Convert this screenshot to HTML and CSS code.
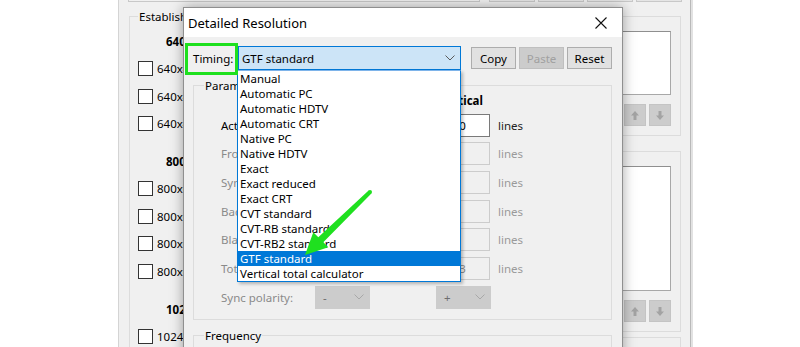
FILE: index.html
```html
<!DOCTYPE html>
<html>
<head>
<meta charset="utf-8">
<link rel="stylesheet" href="styles.css">
</head>
<body>
<div class="desk">
  <div class="bgwin">
    <div class="topbar">
      <div class="tb tb-wide"></div>
      <div class="tb"></div>
      <div class="tb"></div>
      <div class="tb"></div>
      <div class="tb"></div>
    </div>
    <div class="bgbody">
      <fieldset class="estab">
        <legend>Established resolutions</legend>
        <div class="sec">
          <div class="sech">640x480</div>
          <label class="cb"><span class="box"></span>640x480 @ 60 Hz</label>
          <label class="cb"><span class="box"></span>640x480 @ 72 Hz</label>
          <label class="cb"><span class="box"></span>640x480 @ 75 Hz</label>
        </div>
        <div class="sec">
          <div class="sech">800x600</div>
          <label class="cb"><span class="box"></span>800x600 @ 56 Hz</label>
          <label class="cb"><span class="box"></span>800x600 @ 60 Hz</label>
          <label class="cb"><span class="box"></span>800x600 @ 72 Hz</label>
          <label class="cb"><span class="box"></span>800x600 @ 75 Hz</label>
        </div>
        <div class="sec">
          <div class="sech">1024x768</div>
          <label class="cb"><span class="box"></span>1024x768 @ 60 Hz</label>
        </div>
      </fieldset>
      <div class="rcol">
        <div class="rgroup g1">
          <div class="lbox lb1"></div>
          <div class="arrows">
            <span class="abtn"><svg width="10" height="11" viewBox="0 0 10 11"><path d="M5 1 L9 5.5 H6.5 V10 H3.5 V5.5 H1 Z" fill="#a3a3a3"/></svg></span>
            <span class="abtn"><svg width="10" height="11" viewBox="0 0 10 11"><path d="M5 10 L9 5.5 H6.5 V1 H3.5 V5.5 H1 Z" fill="#a3a3a3"/></svg></span>
          </div>
        </div>
        <div class="rgroup g2">
          <div class="lbox lb2"></div>
          <div class="arrows">
            <span class="abtn"><svg width="10" height="11" viewBox="0 0 10 11"><path d="M5 1 L9 5.5 H6.5 V10 H3.5 V5.5 H1 Z" fill="#a3a3a3"/></svg></span>
            <span class="abtn"><svg width="10" height="11" viewBox="0 0 10 11"><path d="M5 10 L9 5.5 H6.5 V1 H3.5 V5.5 H1 Z" fill="#a3a3a3"/></svg></span>
          </div>
        </div>
        <div class="rgroup g3"></div>
      </div>
    </div>
  </div>

  <div class="dialog">
    <div class="titlebar">
      <span class="title">Detailed Resolution</span>
      <span class="close"><svg width="12" height="12" viewBox="0 0 12 12"><path d="M0.5 0.5 L11.5 11.5 M11.5 0.5 L0.5 11.5" stroke="#111" stroke-width="1.1"/></svg></span>
    </div>
    <div class="dbody">
      <div class="timing">
        <span class="tlabel">Timing:</span>
        <div class="combo">
          <span class="ctext">GTF standard</span>
          <svg class="chev" width="10" height="6" viewBox="0 0 10 6"><path d="M0.5 0.5 L5 5 L9.5 0.5" stroke="#5a5a5a" fill="none" stroke-width="1"/></svg>
        </div>
        <span class="btn">Copy</span>
        <span class="btn dis">Paste</span>
        <span class="btn">Reset</span>
      </div>
      <fieldset class="params">
        <legend>Parameters</legend>
        <div class="pgrid">
          <span></span>
          <span class="colh hcol">Horizontal</span>
          <span></span>
          <span class="colh vcol">Vertical</span>
          <span></span>

          <span class="rl">Active:</span>
          <span class="inp on">640</span><span class="unit">pixels</span>
          <span class="inp on">480</span><span class="unit">lines</span>

          <span class="rl off">Front porch:</span>
          <span class="inp"></span><span class="unit off">pixels</span>
          <span class="inp"></span><span class="unit off">lines</span>

          <span class="rl off">Sync width:</span>
          <span class="inp"></span><span class="unit off">pixels</span>
          <span class="inp"></span><span class="unit off">lines</span>

          <span class="rl off">Back porch:</span>
          <span class="inp"></span><span class="unit off">pixels</span>
          <span class="inp"></span><span class="unit off">lines</span>

          <span class="rl off">Blanking:</span>
          <span class="inp"></span><span class="unit off">pixels</span>
          <span class="inp"></span><span class="unit off">lines</span>

          <span class="rl off">Total:</span>
          <span class="inp gray">800</span><span class="unit off">pixels</span>
          <span class="inp gray">503</span><span class="unit off">lines</span>

          <span class="rl off">Sync polarity:</span>
          <span class="dcombo">-<svg width="10" height="6" viewBox="0 0 10 6"><path d="M0.5 0.5 L5 5 L9.5 0.5" stroke="#a8a8a8" fill="none"/></svg></span>
          <span></span>
          <span class="dcombo plus">+<svg width="10" height="6" viewBox="0 0 10 6"><path d="M0.5 0.5 L5 5 L9.5 0.5" stroke="#a8a8a8" fill="none"/></svg></span>
          <span></span>
        </div>
      </fieldset>
      <fieldset class="freq">
        <legend>Frequency</legend>
        <div class="fpad"></div>
      </fieldset>
    </div>
    <ul class="droplist">
      <li>Manual</li>
      <li>Automatic PC</li>
      <li>Automatic HDTV</li>
      <li>Automatic CRT</li>
      <li>Native PC</li>
      <li>Native HDTV</li>
      <li>Exact</li>
      <li>Exact reduced</li>
      <li>Exact CRT</li>
      <li>CVT standard</li>
      <li>CVT-RB standard</li>
      <li>CVT-RB2 standard</li>
      <li class="sel">GTF standard</li>
      <li>Vertical total calculator</li>
    </ul>
  </div>

  <div class="hlbox"></div>
  <svg class="arrow" width="800" height="347" viewBox="0 0 800 347">
    <polygon points="368.6,190.6 371.4,193.4 323.3,242.3 328.3,247.3 305,255 313.3,232.2 318.3,237.2" fill="#1fe01f"/>
    <circle cx="370" cy="192" r="2" fill="#1fe01f"/>
  </svg>
</div>
</body>
</html>
```

FILE: styles.css
```css
* { box-sizing: border-box; }
html, body { margin: 0; padding: 0; }
body {
  width: 800px;
  height: 347px;
  overflow: hidden;
  background: #ffffff;
  font-family: "Noto Sans", "Open Sans", sans-serif;
  font-size: 11.5px;
  color: #000;
}
.desk { position: relative; width: 800px; height: 347px; overflow: hidden; }

/* background window */
.bgwin {
  position: absolute;
  left: 118px;
  top: -22px;
  width: 573px;
  height: 420px;
  background: #f0f0f0;
  border-left: 1px solid #d4d4d4;
  border-right: 1px solid #b9b9b9;
  box-shadow: 2px 0 0 #e2e2e2;
}
.topbar { display: flex; height: 24px; padding-left: 9px; gap: 3px; }
.tb { width: 46px; height: 24px; border: 1px solid #c8c8c8; background: #e5e5e5; }
.tb-wide { width: 352px; margin-right: 6px; background: #f0f0f0; }
.bgbody { display: flex; padding: 0 9px 0 10px; gap: 10px; }

.estab {
  margin: 7px 0 0 0;
  padding: 0;
  width: 300px;
  height: 420px;
  border: 1px solid #dcdcdc;
  min-width: 0;
}
.estab legend { padding: 0 1px; margin-left: 8px; line-height: 15px; color: #000; }
.sec { display: flex; flex-direction: column; padding-left: 8px; }
.sec:first-of-type { margin-top: 10px; }
.sec + .sec { margin-top: 16.5px; }
.sech { font-weight: bold; line-height: 16px; padding-left: 28px; margin-bottom: 5px; }
.cb { display: flex; align-items: center; height: 27.5px; white-space: nowrap; }
.box { width: 15px; height: 15px; border: 1px solid #333; background: #fff; margin-right: 4px; flex: none; }

.rcol { flex: 1; display: flex; flex-direction: column; margin-top: 14px; }
.rgroup { border: 1px solid #dcdcdc; padding: 14px 9px 9px 9px; }
.g2 { margin-top: 15px; }
.g3 { margin-top: 5px; height: 40px; }
.lbox { background: #fff; border: 1px solid #a8a8a8; border-top-color: #8f8f8f; }
.lb1 { height: 64px; }
.lb2 { height: 125px; }
.arrows { display: flex; justify-content: flex-end; gap: 3px; margin-top: 9px; }
.abtn {
  width: 22px; height: 22px; background: #cccccc; border: 1px solid #c4c4c4;
  display: flex; align-items: center; justify-content: center;
}

/* dialog */
.dialog {
  position: absolute;
  left: 183px;
  top: 7px;
  width: 440px;
  height: 360px;
  background: #f0f0f0;
  border: 1px solid #8f8f8f;
  box-shadow: 0 0 12px rgba(0, 0, 0, 0.35);
}
.titlebar { height: 29px; background: #fff; display: flex; align-items: center; padding-left: 4px; }
.title { font-size: 13px; color: #000; }
.close { margin-left: auto; width: 46px; height: 29px; display: flex; align-items: center; justify-content: center; padding-left: 3px; }
.dbody { padding: 9px 10px 0 9px; }
.timing { display: flex; align-items: center; height: 24px; }
.tlabel { width: 45px; }
.combo {
  width: 223px; height: 24px;
  background: #cce4f7;
  border: 1px solid #0078d7;
  display: flex; align-items: center;
  padding: 0 5px 0 3px;
}
.ctext { flex: 1; }
.btn {
  width: 45px; height: 22px;
  background: #e1e1e1;
  border: 1px solid #adadad;
  display: flex; align-items: center; justify-content: center;
  margin-left: 3px;
}
.combo + .btn { margin-left: 10px; }
.btn.dis { background: #cccccc; border-color: #bfbfbf; color: #a0a0a0; }

.params {
  margin: 8px 0 0 0;
  padding: 0 0 10px 0;
  border: 1px solid #dcdcdc;
  min-width: 0;
}
.params legend, .freq legend { margin-left: 10px; padding: 0 1px; line-height: 15px; }
.pgrid {
  display: grid;
  grid-template-columns: 94px 55px 62px 58px 1fr;
  grid-auto-rows: 23px;
  grid-template-rows: 15px;
  row-gap: 5.7px;
  align-items: center;
  padding-left: 27px;
}
.colh { font-weight: bold; }
.vcol { padding-left: 7px; white-space: nowrap; }
.hcol { padding-left: 2px; white-space: nowrap; }
.rl { white-space: nowrap; }
.off { color: #8a8a8a; }
.inp {
  height: 23px;
  border: 1px solid #cccccc;
  background: #f0f0f0;
  display: flex; align-items: center; justify-content: center;
  padding-right: 10px;
  color: #8a8a8a;
}
.inp.on { background: #fff; border-color: #7a7a7a; color: #000; }
.unit { padding-left: 8px; color: #222; }
.unit.off { color: #9a9a9a; }
.dcombo {
  height: 23px;
  background: #cccccc;
  border: 1px solid #cccccc;
  display: flex; align-items: center; justify-content: space-between;
  padding: 0 5px 0 7px;
  color: #6d6d6d;
}
.dcombo.plus { margin-left: 4px; width: 55px; }

.freq {
  margin: 8px 0 0 0;
  padding: 0;
  border: 1px solid #dcdcdc;
  min-width: 0;
}
.fpad { height: 40px; }

.droplist {
  position: absolute;
  left: 53px;
  top: 62px;
  width: 224px;
  margin: 0;
  padding: 0;
  list-style: none;
  background: #fff;
  border: 1px solid #0078d7;
  border-top-color: #7eb4ea;
  box-shadow: 2px 2px 3px rgba(0, 0, 0, 0.25);
}
.droplist li { height: 15px; line-height: 15px; padding-left: 2px; white-space: nowrap; }
.droplist li.sel { background: #0078d7; color: #fff; }

.hlbox {
  position: absolute;
  left: 185px;
  top: 43px;
  width: 53px;
  height: 32px;
  border: 3px solid #1ee01e;
}
.arrow { position: absolute; left: 0; top: 0; pointer-events: none; }
```
